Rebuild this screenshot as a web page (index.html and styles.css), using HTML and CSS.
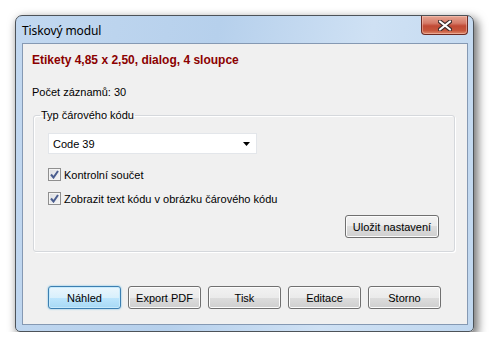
FILE: index.html
```html
<!DOCTYPE html>
<html lang="cs">
<head>
<meta charset="utf-8">
<title>Tiskový modul</title>
<link rel="stylesheet" href="styles.css">
</head>
<body>
<div class="window">
  <div class="titlebar">
    <span class="title">Tiskový modul</span>
    <span class="close">
      <svg width="14" height="11" viewBox="0 0 14 11"><path d="M2 1.5 L12 9.5 M12 1.5 L2 9.5" stroke="#3a2a2a" stroke-width="4.2" stroke-linecap="round"/><path d="M2 1.5 L12 9.5 M12 1.5 L2 9.5" stroke="#ffffff" stroke-width="2.2" stroke-linecap="round"/></svg>
    </span>
  </div>
  <div class="client">
    <div class="heading">Etikety 4,85 x 2,50, dialog, 4 sloupce</div>
    <div class="count">Počet záznamů: 30</div>
    <fieldset class="group">
      <legend>Typ čárového kódu</legend>
      <div class="combo">
        <span>Code 39</span>
        <svg width="8" height="4" viewBox="0 0 8 4"><path d="M0 0 H7 L3.5 4 Z" fill="#000"/></svg>
      </div>
      <label class="check"><span class="box"><svg width="9" height="9" viewBox="0 0 9 9"><path d="M1 4.5 L3.5 7.5 L8 1" stroke="#4a5d8f" stroke-width="2" fill="none"/></svg></span>Kontrolní součet</label>
      <label class="check"><span class="box"><svg width="9" height="9" viewBox="0 0 9 9"><path d="M1 4.5 L3.5 7.5 L8 1" stroke="#4a5d8f" stroke-width="2" fill="none"/></svg></span>Zobrazit text kódu v obrázku čárového kódu</label>
      <div class="save-row"><button class="btn save">Uložit nastavení</button></div>
    </fieldset>
    <div class="buttons">
      <button class="btn default">Náhled</button>
      <button class="btn">Export PDF</button>
      <button class="btn">Tisk</button>
      <button class="btn">Editace</button>
      <button class="btn">Storno</button>
    </div>
  </div>
</div>
</body>
</html>
```
FILE: styles.css
```css
html, body {
  margin: 0;
  padding: 0;
  background: #ffffff;
}
body {
  font-family: "Liberation Sans", Arial, sans-serif;
  font-size: 11px;
  color: #000;
}
.window {
  margin: 15px 0 0 15px;
  width: 459px;
  height: 317px;
  box-sizing: border-box;
  border: 1px solid #4d5359;
  border-radius: 7px 7px 5px 5px;
  background: linear-gradient(100deg, #c2d8f0 0%, #b6d0ec 40%, #cfe1f4 70%, #c0d7ef 100%);
  box-shadow: 3px 4px 10px 1px rgba(0,0,0,0.55);
  padding: 0 5px 6px 6px;
  display: flex;
  flex-direction: column;
}
.titlebar {
  height: 27px;
  display: flex;
  align-items: flex-start;
  justify-content: space-between;
}
.title {
  font-family: "Noto Sans", "Liberation Sans", sans-serif;
  font-size: 12px;
  color: #000;
  margin-top: 6px;
  letter-spacing: -0.1px;
}
.close {
  width: 47px;
  height: 19px;
  box-sizing: border-box;
  border: 1px solid #6b2a22;
  border-top: none;
  border-radius: 0 0 4px 4px;
  background: linear-gradient(#e6a592 0%, #d57a68 40%, #c14a35 55%, #c6553b 80%, #de8b6d 100%);
  box-shadow: inset 0 0 0 1px rgba(255,210,200,0.45);
  display: flex;
  align-items: center;
  justify-content: center;
}
.client {
  flex: 1;
  background: #f0f0f0;
  border: 1px solid #8599b3;
  display: flex;
  flex-direction: column;
}
.heading {
  font-size: 12px;
  font-weight: bold;
  color: #8b0000;
  line-height: 16px;
  margin: 8px 0 0 9px;
}
.count {
  line-height: 13px;
  margin: 18px 0 0 9px;
}
.group {
  margin: 10px 12px 0 10px;
  padding: 11px 15px 13px 14px;
  border: 1px solid #d5d8dc;
  border-radius: 3px;
  box-shadow: inset 1px 1px 0 #ffffff, 1px 1px 0 #ffffff;
  min-width: 0;
}
.group legend {
  margin-left: -8px;
  padding: 0 1px;
  line-height: 13px;
}
.combo {
  width: 209px;
  height: 21px;
  box-sizing: border-box;
  background: #fff;
  border: 1px solid #e3e6ea;
  display: flex;
  align-items: center;
  justify-content: space-between;
  padding: 0 4px 0 4px;
}
.combo svg { display: block; margin-right: 1px; }
.check {
  display: flex;
  align-items: center;
  height: 13px;
  margin-top: 11px;
}
.combo + .check { margin-top: 14px; }
.box {
  width: 13px;
  height: 13px;
  box-sizing: border-box;
  border: 1px solid #8f8f8f;
  background: linear-gradient(135deg, #dcdee2, #f6f6f6);
  box-shadow: inset 0 0 0 1px #f4f4f4;
  display: flex;
  align-items: center;
  justify-content: center;
  margin-right: 3px;
}
.box svg { display: block; }
.save-row {
  display: flex;
  justify-content: flex-end;
  margin-top: 10px;
}
.btn {
  font-family: "Liberation Sans", Arial, sans-serif;
  font-size: 11px;
  color: #000;
  height: 23px;
  box-sizing: border-box;
  border: 1px solid #707070;
  border-radius: 3px;
  background: linear-gradient(#f2f2f2 0%, #ebebeb 50%, #dddddd 50%, #cfcfcf 100%);
  box-shadow: inset 0 0 0 1px #fcfcfc;
  padding: 0;
}
.save { width: 94px; }
.buttons {
  margin: auto 0 15px 25px;
  display: flex;
  gap: 7px;
}
.buttons .btn { width: 73px; }
.btn.default {
  border-color: #3c7fb1;
  background: linear-gradient(#eaf6fd 0%, #d9f0fc 50%, #bee6fd 50%, #a7d9f5 100%);
  box-shadow: inset 0 0 0 1px #c7eafc, 0 0 2px #5fb8e6;
}
```
